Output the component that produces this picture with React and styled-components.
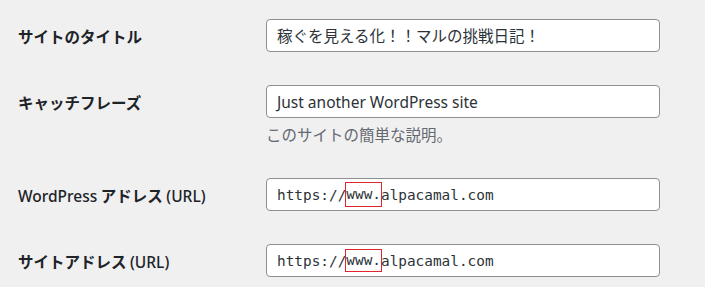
import React from "react";
import styled, { createGlobalStyle } from "styled-components";

const Global = createGlobalStyle`
  html, body { margin: 0; padding: 0; background: #f0f0f1; }
  body { font-family: "Noto Sans", "Noto Sans CJK JP", sans-serif; }
`;

const Page = styled.div`
  width: 705px;
  height: 287px;
  overflow: hidden;
  background: #f0f0f1;
  padding-top: 3px;
  box-sizing: border-box;
`;

const Row = styled.div`
  display: grid;
  grid-template-columns: 266px 394px;
  align-items: start;
  padding: 16px 0 17px;
`;

const Label = styled.div`
  box-sizing: border-box;
  height: 33px;
  padding: 2px 0 0 18px;
  line-height: 31px;
  font-size: 15.5px;
  font-weight: 700;
  color: #1d2327;
  font-family: "Noto Sans CJK JP", sans-serif;
  white-space: nowrap;
`;

const Latin = styled.span`
  font-family: "Noto Sans", "Noto Sans CJK JP", sans-serif;
  font-weight: 500;
  font-size: 15.5px;
`;

const Field = styled.div`
  box-sizing: border-box;
  height: 33px;
  width: 394px;
  border: 1px solid #8c8f94;
  border-radius: 4px;
  background: #fff;
  padding: 0 10px;
  display: flex;
  align-items: center;
  color: #2c3338;
  font-size: ${(p) => (p.$mono ? "14.4px" : "15.5px")};
  font-family: ${(p) =>
    p.$mono
      ? '"DejaVu Sans Mono", monospace'
      : '"Noto Sans", "Noto Sans CJK JP", sans-serif'};
  white-space: nowrap;
`;

const Mark = styled.span`
  display: inline-block;
  box-sizing: border-box;
  border: 1px solid #e0262c;
  height: ${(p) => p.$h}px;
  line-height: ${(p) => p.$h - 2}px;
  margin: 0 -1px;
  padding: 0;
`;

const Col = styled.div`
  display: flex;
  flex-direction: column;
`;

const Description = styled.p`
  margin: 5px 0 0;
  height: 22px;
  line-height: 22px;
  font-size: 15.5px;
  color: #646970;
  font-family: "Noto Sans CJK JP", sans-serif;
`;

export default function App() {
  return (
    <>
      <Global />
      <Page>
        <Row>
          <Label>サイトのタイトル</Label>
          <Field>稼ぐを見える化！！マルの挑戦日記！</Field>
        </Row>
        <Row>
          <Label>キャッチフレーズ</Label>
          <Col>
            <Field>Just another WordPress site</Field>
            <Description>このサイトの簡単な説明。</Description>
          </Col>
        </Row>
        <Row>
          <Label>
            <Latin>WordPress</Latin> アドレス <Latin>(URL)</Latin>
          </Label>
          <Field $mono>
            https://<Mark $h={25}>www.</Mark>alpacamal.com
          </Field>
        </Row>
        <Row>
          <Label>
            サイトアドレス <Latin>(URL)</Latin>
          </Label>
          <Field $mono>
            https://<Mark $h={23}>www.</Mark>alpacamal.com
          </Field>
        </Row>
      </Page>
    </>
  );
}
